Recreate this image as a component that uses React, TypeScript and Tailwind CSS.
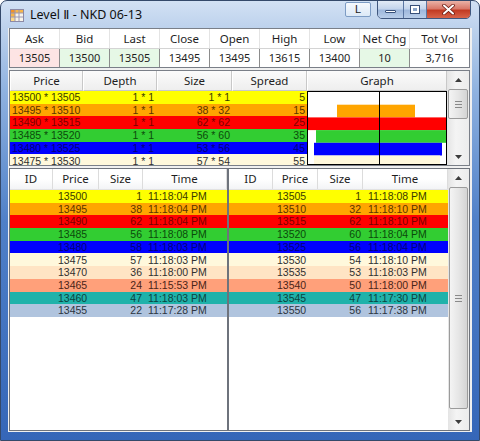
import React from "react";

const STATS = [
  { label: "Ask", value: "13505", bg: "bg-[#fde4e4]", w: "w-[50px]" },
  { label: "Bid", value: "13500", bg: "bg-[#e6f8e6]", w: "w-[50px]" },
  { label: "Last", value: "13505", bg: "bg-[#e6f8e6]", w: "w-[50px]" },
  { label: "Close", value: "13495", bg: "bg-white", w: "w-[50px]" },
  { label: "Open", value: "13495", bg: "bg-white", w: "w-[50px]" },
  { label: "High", value: "13615", bg: "bg-white", w: "w-[50px]" },
  { label: "Low", value: "13400", bg: "bg-white", w: "w-[50px]" },
  { label: "Net Chg", value: "10", bg: "bg-[#e6f8e6]", w: "w-[50px]" },
  { label: "Tot Vol", value: "3,716", bg: "bg-white", w: "flex-1" },
];

// row colours, shared by the book and both time & sales lists
const ROW = [
  "bg-[#ffff00] text-[#3a3a00]",
  "bg-[#ffa500] text-[#5a3400]",
  "bg-[#ff0000] text-[#7a0000]",
  "bg-[#32cd32] text-[#0c4a0c]",
  "bg-[#0000ff] text-[#000078]",
  "bg-[#fff8dc] text-[#303030]",
  "bg-[#ffe4c4] text-[#303030]",
  "bg-[#ffa07a] text-[#4a2418]",
  "bg-[#20b2aa] text-[#0a4440]",
  "bg-[#b0c4de] text-[#2c3440]",
];

const BOOK = [
  ["13500 * 13505", "1 * 1", "1 * 1", "5"],
  ["13495 * 13510", "1 * 1", "38 * 32", "15"],
  ["13490 * 13515", "1 * 1", "62 * 62", "25"],
  ["13485 * 13520", "1 * 1", "56 * 60", "35"],
  ["13480 * 13525", "1 * 1", "53 * 56", "45"],
  ["13475 * 13530", "1 * 1", "57 * 54", "55"],
];

// graph bars: [left, width] inside the 138px box
const BARS: { x: number; w: number; c: string }[] = [
  { x: 0, w: 0, c: "#ffff00" },
  { x: 29, w: 78, c: "#ffa500" },
  { x: 0, w: 138, c: "#ff0000" },
  { x: 8, w: 130, c: "#32cd32" },
  { x: 6, w: 128, c: "#0000ff" },
  { x: 6, w: 126, c: "#fff8dc" },
];

const BIDS = [
  ["13500", "1", "11:18:04 PM"],
  ["13495", "38", "11:18:04 PM"],
  ["13490", "62", "11:18:04 PM"],
  ["13485", "56", "11:18:08 PM"],
  ["13480", "58", "11:18:03 PM"],
  ["13475", "57", "11:18:03 PM"],
  ["13470", "36", "11:18:00 PM"],
  ["13465", "24", "11:15:53 PM"],
  ["13460", "47", "11:18:03 PM"],
  ["13455", "22", "11:17:28 PM"],
];

const ASKS = [
  ["13505", "1", "11:18:08 PM"],
  ["13510", "32", "11:18:10 PM"],
  ["13515", "62", "11:18:10 PM"],
  ["13520", "60", "11:18:04 PM"],
  ["13525", "56", "11:18:04 PM"],
  ["13530", "54", "11:18:10 PM"],
  ["13535", "53", "11:18:03 PM"],
  ["13540", "50", "11:18:00 PM"],
  ["13545", "47", "11:17:30 PM"],
  ["13550", "56", "11:17:38 PM"],
];

const headFont = "font-['Noto_Sans','DejaVu_Sans',sans-serif]";

function Arrow({ down }: { down?: boolean }) {
  return (
    <svg width="7" height="4" viewBox="0 0 7 4" aria-hidden>
      <path d={down ? "M0 0h7L3.5 4z" : "M0 4h7L3.5 0z"} fill="#3c3c3c" />
    </svg>
  );
}

function Scrollbar({
  thumbTop,
  thumbHeight,
  className,
}: {
  thumbTop: number;
  thumbHeight: number;
  className: string;
}) {
  return (
    <div className={`flex flex-col bg-[linear-gradient(90deg,#e4e4e4,#f4f4f4_40%,#ececec)] ${className}`}>
      <div className="flex h-[17px] shrink-0 items-center justify-center">
        <Arrow />
      </div>
      <div className="relative flex-1">
        <div
          className="absolute inset-x-[1px] flex flex-col items-center justify-center gap-[2px] rounded-[2px] border border-[#9b9b9b] bg-[linear-gradient(90deg,#f4f4f4,#e6e6e6_50%,#d4d4d4)]"
          style={{ top: thumbTop, height: thumbHeight }}
        >
          <div className="h-px w-[7px] bg-[#8a8a8a]" />
          <div className="h-px w-[7px] bg-[#8a8a8a]" />
          <div className="h-px w-[7px] bg-[#8a8a8a]" />
        </div>
      </div>
      <div className="flex h-[17px] shrink-0 items-center justify-center">
        <Arrow down />
      </div>
    </div>
  );
}

function TitleIcon() {
  return (
    <svg width="14" height="13" viewBox="0 0 14 13" aria-hidden>
      <rect x="0.5" y="0.5" width="13" height="12" fill="#f8f4ea" stroke="#8c8aa6" />
      <rect x="1" y="1" width="4" height="3" fill="#f2922a" />
      <rect x="5" y="1" width="4" height="3" fill="#f7b64a" />
      <rect x="9" y="1" width="4" height="3" fill="#f7b64a" />
      <rect x="1" y="4" width="4" height="4" fill="#f7b64a" />
      <rect x="1" y="8" width="4" height="4" fill="#fcd98a" />
      <path d="M5 1v11M9 1v11M1 4h12M1 8h12" stroke="#9a98b4" strokeWidth="1" />
    </svg>
  );
}

function ListHeader({ cols }: { cols: { label: string; w: string }[] }) {
  return (
    <div className={`flex h-[21px] shrink-0 border-b border-[#e2e2e2] bg-[linear-gradient(180deg,#ffffff,#ffffff_50%,#f3f4f6)] text-[11.5px] text-[#1e1e1e] ${headFont}`}>
      {cols.map((c) => (
        <div key={c.label} className={`flex items-center justify-center border-r border-[#dcdcdc] ${c.w}`}>
          {c.label}
        </div>
      ))}
    </div>
  );
}

function TradeList({ rows, right }: { rows: string[][]; right?: boolean }) {
  const cols = right
    ? [
        { label: "ID", w: "w-[44px]" },
        { label: "Price", w: "w-[45px]" },
        { label: "Size", w: "w-[45px]" },
        { label: "Time", w: "w-[85px]" },
      ]
    : [
        { label: "ID", w: "w-[43px]" },
        { label: "Price", w: "w-[46px]" },
        { label: "Size", w: "w-[44px]" },
        { label: "Time", w: "w-[84px]" },
      ];
  return (
    <div className="flex min-w-0 flex-1 flex-col">
      <ListHeader cols={cols} />
      <div className="flex flex-col">
        {rows.map((r, i) => (
          <div key={r[0]} className={`flex h-[12.7px] items-center text-[10.5px] leading-none ${ROW[i]}`}>
            <div className={cols[0].w} />
            <div className={`${cols[1].w} ${right ? "pl-[4px]" : "pl-[5px]"}`}>{r[0]}</div>
            <div className={`${cols[2].w} text-right ${right ? "pr-[2px]" : "pr-[1px]"}`}>{r[1]}</div>
            <div className={`${cols[3].w} pl-[5px]`}>{r[2]}</div>
          </div>
        ))}
      </div>
    </div>
  );
}

export default function App() {
  return (
    <div className="flex h-[441px] w-[480px] flex-col overflow-hidden rounded-t-[7px] border border-[#34496a] bg-[linear-gradient(180deg,#d2e1f4_0px,#bcd1ec_28px,#8fb2e0_90px,#4f80c8_220px,#3566b8_441px)] font-['Liberation_Sans',Arial,sans-serif] text-black">
      {/* title bar */}
      <div className="flex h-[27px] shrink-0 items-start">
        <div className="ml-[9px] mt-[8px]">
          <TitleIcon />
        </div>
        <div className={`ml-[6px] mt-[5px] text-[12.5px] text-[#101010] ${headFont}`}>
          Level Ⅱ - NKD 06-13
        </div>
        <div className="flex-1" />
        <div className="mt-[1px] flex h-[15px] w-[26px] items-center justify-center rounded-[2px] border border-[#7d9cc4] bg-[linear-gradient(180deg,#f6f9fd,#dce9f7)] text-[11px] text-[#1a1a1a]">
          L
        </div>
        <div className="ml-[6px] mr-[8px] flex h-[19px] -mt-px overflow-hidden rounded-b-[5px] border border-[#40577e]">
          <div className="flex w-[26px] items-end justify-center border-r border-[#5a76a2] bg-[linear-gradient(180deg,#e2ebf6,#c4d5ec_45%,#9fb8dc_55%,#b8cde9)] pb-[5px]">
            <div className="h-[3px] w-[11px] rounded-[1px] border border-[#38507a] bg-white" />
          </div>
          <div className="flex w-[23px] items-center justify-center border-r border-[#5a76a2] bg-[linear-gradient(180deg,#e2ebf6,#c4d5ec_45%,#9fb8dc_55%,#b8cde9)]">
            <div className="h-[9px] w-[10px] border border-[#38507a] bg-white p-[2px]">
              <div className="h-full w-full bg-[#8aa4c8]" />
            </div>
          </div>
          <div className="flex w-[43px] items-center justify-center bg-[linear-gradient(180deg,#eab2a6,#d9796a_45%,#c23b23_55%,#d8644a)]">
            <svg width="13" height="11" viewBox="0 0 13 11" aria-hidden>
              <path d="M2 1.5l9 8M11 1.5l-9 8" stroke="#6b1a10" strokeWidth="3.6" strokeLinecap="round" />
              <path d="M2 1.5l9 8M11 1.5l-9 8" stroke="#ffffff" strokeWidth="2" strokeLinecap="round" />
            </svg>
          </div>
        </div>
      </div>

      {/* client area */}
      <div className="ml-[7px] flex h-[404px] w-[464px] flex-col bg-[#f0f0f0] pl-[1px]">
        {/* summary */}
        <div className="flex h-[40px] w-[461px] shrink-0 flex-col border border-[#7a7f88] bg-white">
          <div className={`flex h-[19px] text-[11.5px] text-[#1e1e1e] ${headFont}`}>
            {STATS.map((s) => (
              <div key={s.label} className={`flex items-center justify-center border-r border-[#e4e4e4] last:border-r-0 ${s.w}`}>
                {s.label}
              </div>
            ))}
          </div>
          <div className={`flex flex-1 border-t border-[#d4d4d4] text-[11px] text-[#1e1e1e] ${headFont}`}>
            {STATS.map((s) => (
              <div key={s.label} className={`flex items-center justify-center border-r border-[#8c8c8c] last:border-r-0 ${s.w} ${s.bg}`}>
                {s.value}
              </div>
            ))}
          </div>
        </div>

        {/* book */}
        <div className="mt-[2px] flex h-[96px] w-[461px] shrink-0 border border-[#7a7f88] bg-white">
          <div className="flex flex-col">
            <div className={`flex h-[20px] shrink-0 text-[11.5px] text-[#1e1e1e] ${headFont}`}>
              {[
                ["Price", "w-[73px]"],
                ["Depth", "w-[74px]"],
                ["Size", "w-[75px]"],
                ["Spread", "w-[75px]"],
                ["Graph", "w-[140px]"],
              ].map(([l, w]) => (
                <div
                  key={l}
                  className={`flex items-center justify-center border-b border-l border-r border-b-[#c8c8c8] border-l-white border-r-[#c8c8c8] bg-[linear-gradient(180deg,#fbfbfb,#eeeeee)] ${w}`}
                >
                  {l}
                </div>
              ))}
            </div>
            <div className="flex h-[74px] overflow-hidden">
              <div className="flex w-[297px] flex-col text-[10.5px] leading-none">
                {BOOK.map((r, i) => (
                  <div key={r[0]} className={`flex h-[12.7px] shrink-0 items-center ${ROW[i]}`}>
                    <div className="w-[73px] pl-[2px]">{r[0]}</div>
                    <div className="w-[74px] pr-[3px] text-right">{r[1]}</div>
                    <div className="w-[75px] pr-[2px] text-right">{r[2]}</div>
                    <div className="w-[75px] pr-[2px] text-right">{r[3]}</div>
                  </div>
                ))}
              </div>
              <div className="h-[74px] w-[140px] border border-black bg-white">
                <svg width="138" height="72" viewBox="0 0 138 72" aria-hidden>
                  {BARS.map((b, i) =>
                    b.w > 0 ? (
                      <rect key={i} x={b.x} y={i * 12.7} width={b.w} height={12.7} fill={b.c} />
                    ) : null
                  )}
                  <line x1="71.5" y1="0" x2="71.5" y2="72" stroke="#000" strokeWidth="1" />
                </svg>
              </div>
            </div>
          </div>
          <Scrollbar className="w-[22px]" thumbTop={1} thumbHeight={30} />
        </div>

        {/* time & sales */}
        <div className="mt-[2px] flex h-[263px] w-[461px] shrink-0">
          <div className="flex w-[219px] border border-[#6e737c] bg-white">
            <TradeList rows={BIDS} />
          </div>
          <div className="flex w-[242px] border border-[#6e737c] bg-white">
            <TradeList rows={ASKS} right />
            <Scrollbar className="w-[21px]" thumbTop={1} thumbHeight={222} />
          </div>
        </div>
      </div>
    </div>
  );
}
